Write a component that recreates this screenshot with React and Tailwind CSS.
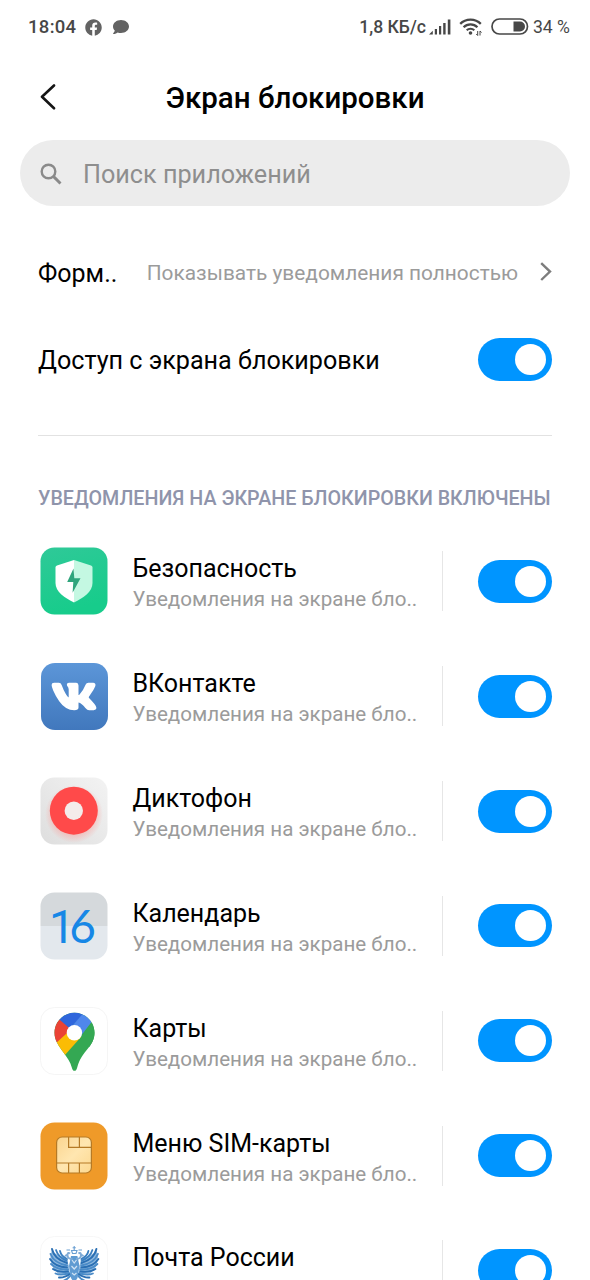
import React, { useState } from "react";
import { FaFacebook, FaComment, FaVk } from "react-icons/fa";

const SUBTITLE = "Уведомления на экране бло..";

function SecurityIcon() {
  return (
    <svg viewBox="0 0 68 68" className="w-[68px] h-[68px]">
      <defs>
        <linearGradient id="sec" x1="0" y1="0" x2="0.3" y2="1">
          <stop offset="0" stopColor="#2fc998" />
          <stop offset="1" stopColor="#17cc8b" />
        </linearGradient>
      </defs>
      <rect x="0.5" y="0.5" width="67" height="67" rx="14" fill="url(#sec)" />
      <path d="M34 13 L51 18.5 Q52.5 19 52.5 20.5 V36 C52.5 45 43 51 34 55.5 Z" fill="#c4f8e2" />
      <path d="M34 13 L17 18.5 Q15.5 19 15.5 20.5 V36 C15.5 45 25 51 34 55.5 Z" fill="#ffffff" />
      <path d="M33.5 21.5 L27.2 35 H33.3 L32.6 45.8 L40.5 31.3 H34.3 Z" fill="#2fa57c" />
    </svg>
  );
}

function VkIcon() {
  return (
    <div className="w-[67px] h-[67px] m-[0.5px] rounded-[14px] bg-gradient-to-b from-[#5c96d8] to-[#4178bd] flex items-center justify-center">
      <FaVk className="w-[46px] h-[43px] text-white overflow-visible" stroke="white" strokeWidth="22" strokeLinejoin="round" />
    </div>
  );
}

function RecorderIcon() {
  return (
    <svg viewBox="0 0 68 68" className="w-[68px] h-[68px]">
      <defs>
        <linearGradient id="rec" x1="0" y1="1" x2="1" y2="0">
          <stop offset="0" stopColor="#dedede" />
          <stop offset="1" stopColor="#f3f3f3" />
        </linearGradient>
        <radialGradient id="glow">
          <stop offset="0.7" stopColor="#ff8a85" stopOpacity="0.4" />
          <stop offset="1" stopColor="#ff8a85" stopOpacity="0" />
        </radialGradient>
      </defs>
      <rect x="0.5" y="0.5" width="67" height="67" rx="14" fill="url(#rec)" />
      <circle cx="34" cy="37" r="29" fill="url(#glow)" />
      <circle cx="33.8" cy="33.7" r="24" fill="#ff4a4a" />
      <circle cx="33.8" cy="33.7" r="9.2" fill="#f4ecea" />
    </svg>
  );
}

function CalendarIcon() {
  return (
    <svg viewBox="0 0 68 68" className="w-[68px] h-[68px]">
      <defs>
        <clipPath id="cal">
          <rect x="0.5" y="0.5" width="67" height="67" rx="14" />
        </clipPath>
      </defs>
      <g clipPath="url(#cal)">
        <rect width="68" height="34" fill="#d5d9dc" />
        <rect y="34" width="68" height="34" fill="#e3e8ed" />
      </g>
      <text x="9" y="50.5" fill="#1787e6" fontSize="46">
        <tspan className="font-[Roboto]">1</tspan>
        <tspan dx="-5.5" className="font-[Lato]">6</tspan>
      </text>
    </svg>
  );
}

function MapsIcon() {
  return (
    <svg viewBox="0 0 68 68" className="w-[68px] h-[68px]">
      <defs>
        <clipPath id="pin">
          <path d="M34.5 5.8 C45.5 5.8 54.5 14.7 54.5 25.8 C54.5 32 52 36.5 48.5 40.8 C43 47.5 39.5 52 37.2 60.5 C36.5 63 36 63.8 34.5 63.8 C33 63.8 32.5 63 31.8 60.5 C30.3 55 27.5 51 23.5 45.5 C18.5 38.5 14.5 33.5 14.5 25.8 C14.5 14.7 23.5 5.8 34.5 5.8 Z" />
        </clipPath>
      </defs>
      <rect x="0.5" y="0.5" width="67" height="67" rx="14" fill="#fff" stroke="#f5f5f5" />
      <g clipPath="url(#pin)">
        <rect width="68" height="68" fill="#34a853" />
        <path d="M10 0 H43 L42.5 8 L28 24 L18 12 Z" fill="#2f66dc" />
        <path d="M42.5 7 L60 4 L40 30 L28 24 Z" fill="#4f87ec" />
        <path d="M56 10 L60 40 L34 40 Z" fill="#34a853" />
        <path d="M29 20.8 L41 30 L24.5 48.5 L8 45 Z" fill="#fbbc04" />
        <path d="M19 12.2 L31 22.5 L15.5 36.5 L8 30 Z" fill="#ea4335" />
      </g>
      <circle cx="34.4" cy="25.8" r="7.7" fill="#fff" />
    </svg>
  );
}

function SimIcon() {
  return (
    <svg viewBox="0 0 68 68" className="w-[68px] h-[68px]">
      <defs>
        <linearGradient id="chip" x1="0" y1="0" x2="1" y2="1">
          <stop offset="0" stopColor="#fbd58f" />
          <stop offset="0.5" stopColor="#ffe6b0" />
          <stop offset="1" stopColor="#fcd88f" />
        </linearGradient>
      </defs>
      <rect x="0.5" y="0.5" width="67" height="67" rx="14" fill="#ef9a29" />
      <rect x="16.6" y="15" width="34.8" height="36" rx="5.5" fill="url(#chip)" />
      <g fill="none" stroke="#b57a26" strokeWidth="1.2">
        <rect x="16.6" y="15" width="34.8" height="36" rx="5.5" />
        <path d="M28.6 15 V25.4 H51.4 M39.4 15 V25.4 M16.6 41 H51.4 M28.6 41 V51 M39.4 41 V51" />
      </g>
    </svg>
  );
}

// Left wing feathers, mirrored for the right one
const FEATHERS = [
  "M12 13 Q14 23 27 27",
  "M10.5 18 Q14 27 27 29.5",
  "M10 23 Q15 31 27 31.5",
  "M11 28 Q17 34 28 33.5",
  "M13 33 Q19 37 28 35.5",
  "M15.5 37.5 Q21 40 29 37",
  "M19 41.5 Q24 42 30 38",
  "M23 45 Q27 44 31 39",
];

function Wing() {
  return (
    <g fill="none" strokeLinecap="round">
      <path d="M12 13 Q15 19 21 20 Q27 23 29 30 L30 39 L20 39 Q10 32 10.5 20 Z" fill="#8fb8de" />
      {FEATHERS.map((d, i) => (
        <path key={d} d={d} stroke={i % 2 ? "#4a8bc8" : "#2a6fb3"} strokeWidth="1.9" />
      ))}
      <path d="M16 14 Q18 21 27 25 M20 15 Q21 20 27 23" stroke="#3a7fc0" strokeWidth="1.8" />
    </g>
  );
}

function PostIcon() {
  return (
    <svg viewBox="0 0 68 68" className="w-[68px] h-[68px]">
      <rect x="0.5" y="0.5" width="67" height="67" rx="14" fill="#fff" stroke="#f7f7f7" />
      <Wing />
      <g transform="translate(68.4 0) scale(-1 1)">
        <Wing />
      </g>
      <path d="M31 20 H37.4 L39.5 30 L37.5 42 L34.2 47 L31 42 L29 30 Z" fill="#5f9bd2" />
      <path d="M32 24 L34.2 27 L36.5 24 M31.5 30 L34.2 33 L37 30 M32 37 L34.2 39 L36.5 37" fill="none" stroke="#cfe2f3" strokeWidth="1.2" />
      <g fill="none" stroke="#7fabd6" strokeWidth="2">
        <path d="M32.5 23 Q27 23 27.5 18.5 Q28 16 30 17.5 M27.5 18.5 L25 20" />
        <path d="M36 23 Q41.4 23 41 18.5 Q40.4 16 38.4 17.5 M41 18.5 L43.5 20" />
      </g>
      <path d="M34.2 10 V14 M32.6 11.8 H35.8 M31.5 14.5 H37 L36 17.5 H32.5 Z M26.5 14 H30 M38.5 14 H42" fill="none" stroke="#6a9fd2" strokeWidth="1.1" />
    </svg>
  );
}

const apps = [
  { name: "Безопасность", subtitle: SUBTITLE, Icon: SecurityIcon },
  { name: "ВКонтакте", subtitle: SUBTITLE, Icon: VkIcon },
  { name: "Диктофон", subtitle: SUBTITLE, Icon: RecorderIcon },
  { name: "Календарь", subtitle: SUBTITLE, Icon: CalendarIcon },
  { name: "Карты", subtitle: SUBTITLE, Icon: MapsIcon },
  { name: "Меню SIM-карты", subtitle: SUBTITLE, Icon: SimIcon },
  { name: "Почта России", subtitle: "", Icon: PostIcon },
];

function Toggle() {
  const [on, setOn] = useState(true);
  return (
    <button
      role="switch"
      aria-checked={on}
      onClick={() => setOn((v) => !v)}
      className={`w-[74px] h-[43px] shrink-0 rounded-full px-[6px] flex items-center ${on ? "bg-[#0095ff] justify-end" : "bg-gray-300 justify-start"}`}
    >
      <span className="w-[31px] h-[31px] rounded-full bg-white" />
    </button>
  );
}

function StatusBar() {
  return (
    <div className="h-[54px] shrink-0 flex items-center justify-between pl-[28px] pr-[20px] text-[#474747] font-medium">
      <div className="flex items-center">
        <span className="text-[18.5px] tracking-[0.3px] pt-px">18:04</span>
        <FaFacebook className="w-[17px] h-[17px] ml-[9px] text-[#636363]" />
        <FaComment className="w-[16px] h-[16px] ml-[11px] text-[#636363]" />
      </div>
      <div className="flex items-center text-[17.6px]">
        <span className="pt-px">1,8 КБ/с</span>
        <svg viewBox="0 0 22 16" className="w-[22px] h-[16px] ml-[3px]" fill="#474747">
          <path d="M0 15.5 L3.8 11.7 V15.5 Z M5.8 10 H8 V15.5 H5.8 Z M10 7 H12.2 V15.5 H10 Z M14.2 4 H16.6 V15.5 H14.2 Z M18.8 0.5 H21.4 V15.5 H18.8 Z" />
        </svg>
        <svg viewBox="0 0 24 18" className="w-[24px] h-[18px] ml-[8px]" fill="none" stroke="#474747">
          <path d="M1.2 5.9 C6.8 0.2 16.2 0.2 21.8 5.9 M4.6 9.2 C8.4 5.4 14.6 5.4 18.4 9.2" strokeWidth="2.3" />
          <path d="M7.7 12.2 C9.8 10.2 13.2 10.2 15.3 12.2" strokeWidth="2.1" />
          <circle cx="11.5" cy="15" r="1.8" fill="#474747" stroke="none" />
          <path d="M18.7 13 V17.5 L17.2 16 M21 17.5 V13 L22.6 14.5" strokeWidth="1" />
        </svg>
        <svg viewBox="0 0 38 17" className="w-[38px] h-[17px] ml-[8px]">
          <rect x="1" y="1" width="35.5" height="15" rx="7.5" fill="none" stroke="#474747" strokeWidth="1.7" />
          <path d="M22.5 3.5 H29 A5 5 0 0 1 29 13.5 H22.5 Z" fill="#474747" />
        </svg>
        <span className="ml-[4px] font-normal pt-px">34 %</span>
      </div>
    </div>
  );
}

export default function App() {
  return (
    <div className="w-full h-screen overflow-hidden bg-white flex flex-col font-[Roboto,sans-serif] text-black whitespace-nowrap">
      <StatusBar />

      {/* Header */}
      <div className="h-[86px] shrink-0 flex items-center px-[40px]">
        <svg viewBox="0 0 16 26" className="w-[16px] h-[26px]" fill="none" stroke="#151515" strokeWidth="2.6" strokeLinecap="round" strokeLinejoin="round">
          <path d="M14 1.5 L2 12.8 L14 24.3" />
        </svg>
        <h1 className="flex-1 text-center text-[29.5px] font-medium pr-[16px] pt-[2px]">Экран блокировки</h1>
      </div>

      {/* Search */}
      <div className="h-[66px] shrink-0 mx-[20px] rounded-full bg-[#ececec] flex items-center pl-[20px] text-[#8e8e8e]">
        <svg viewBox="0 0 22 22" className="w-[22px] h-[22px] mt-px" fill="none" stroke="#8a8a8a" strokeWidth="2.4">
          <circle cx="8.5" cy="8.5" r="6.8" />
          <path d="M13.4 13.4 L20.5 20.5" strokeWidth="2.9" />
        </svg>
        <span className="ml-[21px] text-[25.2px] pt-[3px]">Поиск приложений</span>
      </div>

      <div className="mt-[22px] h-[88px] shrink-0 flex items-center pl-[38px] pr-[38px]">
        <span className="text-[25px] pt-[3px]">Форм..</span>
        <span className="ml-auto text-[20.85px] text-[#9b9b9b] pt-[3px]">Показывать уведомления полностью</span>
        <svg viewBox="0 0 12 20" className="w-[12px] h-[20px] ml-[22px]" fill="none" stroke="#7d7d7d" strokeWidth="2.4">
          <path d="M1.2 1.2 L10 9.6 L1.2 18" />
        </svg>
      </div>

      <div className="h-[86px] shrink-0 flex items-center justify-between px-[38px]">
        <span className="text-[25.15px] pt-[3px]">Доступ с экрана блокировки</span>
        <Toggle />
      </div>

      <div className="mt-[33px] mx-[38px] h-px shrink-0 bg-[#e2e2e2]" />

      <h2 className="mt-[42px] h-[40px] shrink-0 px-[38px] pt-[2px] flex items-center text-[19.7px] font-medium text-[#8f94ab]">
        УВЕДОМЛЕНИЯ НА ЭКРАНЕ БЛОКИРОВКИ ВКЛЮЧЕНЫ
      </h2>

      {/* App list */}
      <div className="mt-[6px] shrink-0 flex flex-col">
        {apps.map(({ name, subtitle, Icon }) => (
          <div key={name} className="h-[114.85px] flex items-center pl-[40px] pr-[38px]">
            <Icon />
            <div className="ml-[24.5px] pt-[6px] flex-1 flex flex-col">
              <span className="text-[25px] leading-[31px]">{name}</span>
              <span className="h-[31px] text-[20.6px] leading-[31px] text-[#9b9b9b]">{subtitle}</span>
            </div>
            <div className="w-px h-[60px] bg-[#e6e6e6] mr-[35px]" />
            <Toggle />
          </div>
        ))}
      </div>
    </div>
  );
}
